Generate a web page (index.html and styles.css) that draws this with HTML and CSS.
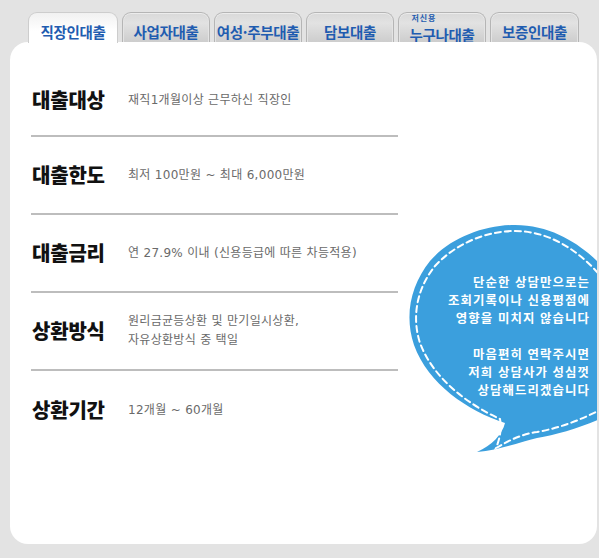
FILE: index.html
```html
<!DOCTYPE html>
<html lang="ko">
<head>
<meta charset="utf-8">
<title>직장인대출</title>
<link rel="stylesheet" href="styles.css">
</head>
<body>
<div class="page">
  <nav class="tabs">
    <a class="tab tab--active w90">직장인대출</a>
    <a class="tab w88">사업자대출</a>
    <a class="tab w88">여성·주부대출</a>
    <a class="tab w88">담보대출</a>
    <a class="tab tab--double w88"><span class="tab-stack"><span class="tab-small">저신용</span><span class="tab-main">누구나대출</span></span></a>
    <a class="tab w89">보증인대출</a>
  </nav>
  <section class="panel">
    <ul class="rows">
      <li class="row row--first">
        <h3 class="label">대출대상</h3>
        <p class="desc">재직1개월이상 근무하신 직장인</p>
      </li>
      <li class="row">
        <h3 class="label">대출한도</h3>
        <p class="desc">최저 100만원 ~ 최대 6,000만원</p>
      </li>
      <li class="row">
        <h3 class="label">대출금리</h3>
        <p class="desc">연 27.9% 이내 (신용등급에 따른 차등적용)</p>
      </li>
      <li class="row">
        <h3 class="label">상환방식</h3>
        <p class="desc">원리금균등상환 및 만기일시상환,<br>자유상환방식 중 택일</p>
      </li>
      <li class="row row--last">
        <h3 class="label">상환기간</h3>
        <p class="desc">12개월 ~ 60개월</p>
      </li>
    </ul>
    <div class="bubble">
      <svg class="bubble-shape" width="210" height="245" viewBox="400 215 210 245" xmlns="http://www.w3.org/2000/svg">
        <path fill="#3b9fdd" d="M 515 225 C 555 225 585 248 602 266 L 602 418 C 582 427 556 435 537 438 C 520 442 500 450 477 452 C 492 445 502 435 505 423 C 468 411 428 384 414 345 C 404 315 411 285 430 261 C 450 238 484 225 515 225 Z"/>
        <path fill="none" stroke="#ffffff" stroke-width="2" stroke-dasharray="6 4" stroke-linecap="round" d="M 598 273 C 582 255 553 231 515 231 C 487 231 456 243 435 266 C 418 287 411 315 420 343 C 433 378 467 404 500 419 C 502 430 499 441 496 448 C 510 440 522 434 537 432 C 560 428 580 420 600 410"/>
      </svg>
      <div class="bubble-text">
        <p>단순한 상담만으로는<br>조회기록이나 신용평점에<br>영향을 미치지 않습니다</p>
        <p>마음편히 연락주시면<br>저희 상담사가 성심껏<br>상담해드리겠습니다</p>
      </div>
    </div>
  </section>
</div>
</body>
</html>
```

FILE: styles.css
```css
* { box-sizing: border-box; }

html, body {
  margin: 0;
  padding: 0;
  background: #e3e3e3;
  font-family: "Noto Sans CJK KR", "Noto Sans", sans-serif;
}

.page {
  width: 599px;
  height: 558px;
  padding: 12px 2px 0 10px;
  overflow: hidden;
}

.tabs {
  display: flex;
  gap: 4px;
  padding-left: 18px;
  height: 30px;
}

.tab {
  display: block;
  height: 30px;
  padding-top: 10px;
  border: 1px solid #b5b5b5;
  border-bottom: none;
  border-radius: 9px 9px 0 0;
  background: linear-gradient(#d9d9d9, #e2e2e2 35%, #cdcdcd);
  box-shadow: inset 0 1px 0 #ececec, inset 1px 0 0 #e4e4e4, inset -1px 0 0 #e4e4e4;
  color: #1f5cb0;
  font-size: 14.5px;
  font-weight: 700;
  line-height: 18px;
  text-align: center;
  white-space: nowrap;
  letter-spacing: -0.3px;
}

.w90 { width: 90px; }
.w88 { width: 88px; }
.w89 { width: 89px; }

.tab--active {
  background: linear-gradient(#f1f1f1, #ffffff 60%);
  border-color: #cdcdcd;
  box-shadow: none;
  position: relative;
  z-index: 2;
  height: 31px;
}

.tab--double {
  display: flex;
  justify-content: center;
  padding-top: 0;
}

.tab-stack {
  display: flex;
  flex-direction: column;
  align-items: flex-start;
}

.tab-small {
  font-size: 8px;
  line-height: 10px;
  letter-spacing: 1px;
  padding-left: 2px;
}

.tab-main {
  line-height: 17px;
  margin-top: 3px;
}

.panel {
  position: relative;
  width: 587px;
  height: 502px;
  background: #ffffff;
  border-radius: 18px;
  overflow: hidden;
  padding: 23px 0 0 21px;
}

.rows {
  list-style: none;
  margin: 0;
  padding: 0;
  width: 367px;
}

.row {
  display: flex;
  align-items: center;
  height: 78px;
  padding-left: 1px;
  border-bottom: 2px solid #bdbdbd;
}

.row--first { height: 72px; }
.row--last { border-bottom: none; }

.label {
  width: 96px;
  flex: none;
  margin: 0;
  font-size: 20px;
  font-weight: 900;
  color: #111111;
  line-height: 24px;
  letter-spacing: -0.2px;
}

.desc {
  margin: 0;
  font-family: "DejaVu Sans", "Noto Sans CJK KR", sans-serif;
  font-size: 12px;
  line-height: 19px;
  color: #6a6a6a;
  letter-spacing: 0.3px;
}

.bubble {
  position: absolute;
  left: 390px;
  top: 173px;
  width: 210px;
  height: 245px;
}

.bubble-shape {
  display: block;
}

.bubble-text {
  position: absolute;
  right: 20px;
  top: 58px;
  text-align: right;
  color: #ffffff;
  font-size: 12.4px;
  font-weight: 700;
  line-height: 18px;
  letter-spacing: 1.1px;
  white-space: nowrap;
}

.bubble-text p {
  margin: 0;
}

.bubble-text p + p {
  margin-top: 18px;
}
```
